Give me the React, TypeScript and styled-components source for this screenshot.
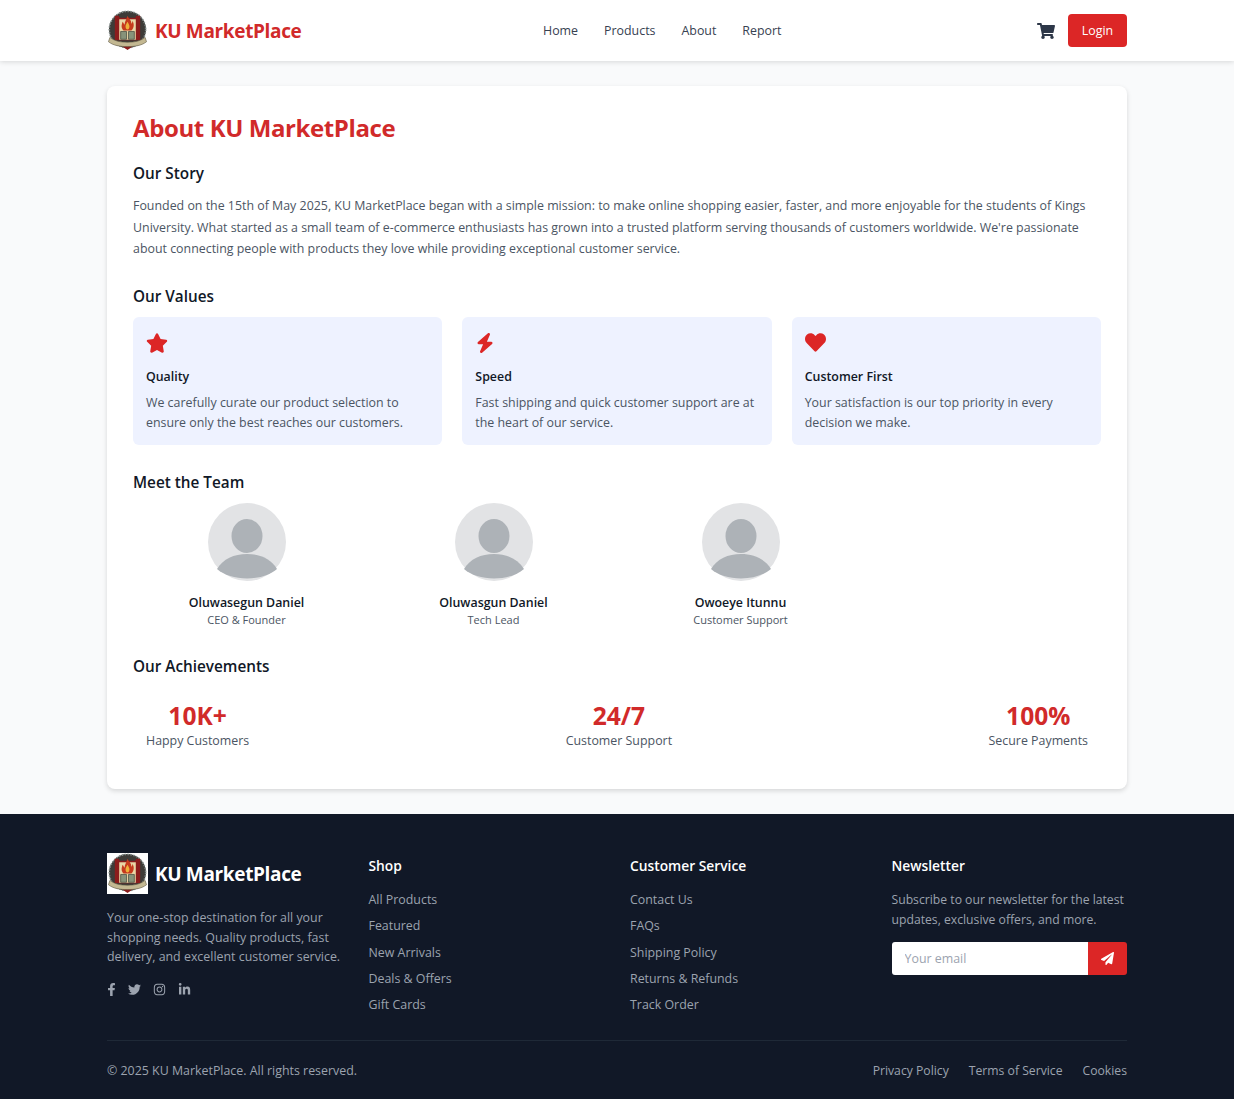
import React from "react";
import styled, { createGlobalStyle } from "styled-components";
import {
  FaFacebookF,
  FaHeart,
  FaInstagram,
  FaLinkedinIn,
  FaPaperPlane,
  FaShoppingCart,
  FaStar,
  FaTwitter,
} from "react-icons/fa";
import { FaBolt } from "react-icons/fa6";

const GlobalStyle = createGlobalStyle`
  * { box-sizing: border-box; }
  html, body { margin: 0; padding: 0; }
  body {
    background: #f9fafb;
    font-family: "Open Sans", "Noto Sans", sans-serif;
    color: #111827;
  }
  h1, h2, h3, h4, p, ul { margin: 0; padding: 0; }
  ul { list-style: none; }
`;

const Container = styled.div`
  width: 1020px;
  margin: 0 auto;
`;

const Header = styled.header`
  height: 61px;
  background: #fff;
  box-shadow: 0 1px 5px rgb(0 0 0 / 14%);
`;

const HeaderRow = styled(Container)`
  height: 100%;
  display: flex;
  align-items: center;
  justify-content: space-between;
`;

const Brand = styled.div<{ $light?: boolean }>`
  display: flex;
  align-items: center;
  gap: 7px;
  font-size: 19px;
  font-weight: 700;
  letter-spacing: -0.35px;
  color: ${(props) => (props.$light ? "#fff" : "#d12a2a")};
`;

const Nav = styled.nav`
  display: flex;
  gap: 26px;
  margin-right: 14px;
  font-size: 12.4px;
  color: #374151;
`;

const HeaderActions = styled.div`
  display: flex;
  align-items: center;
  gap: 13px;
  color: #2d3748;
`;

const LoginButton = styled.button`
  width: 59px;
  height: 33px;
  border: none;
  border-radius: 4px;
  background: #dc2626;
  color: #fff;
  font: 500 12.4px "Open Sans", sans-serif;
`;

const Main = styled.main`
  padding: 25px 0 25px;
`;

const Card = styled(Container)`
  height: 703px;
  padding: 26px 26px 0;
  background: #fff;
  border-radius: 8px;
  box-shadow: 0 2px 5px rgb(0 0 0 / 14%);
`;

const Title = styled.h1`
  font-size: 24px;
  line-height: 32px;
  font-weight: 700;
  letter-spacing: -0.4px;
  color: #d12a2a;
`;

const SectionTitle = styled.h2<{ $top: number }>`
  margin-top: ${(props) => props.$top}px;
  font-size: 15.3px;
  line-height: 22px;
  font-weight: 600;
  color: #111827;
`;

const Paragraph = styled.p`
  margin-top: 11px;
  font-size: 12.4px;
  line-height: 21.5px;
  color: #4b5563;
`;

const ValueGrid = styled.div`
  display: grid;
  grid-template-columns: repeat(3, 1fr);
  gap: 20px;
  margin-top: 10px;
`;

const ValueCard = styled.div`
  height: 128px;
  padding: 15px 13px 0;
  background: #eef2ff;
  border-radius: 6px;
`;

const ValueIcon = styled.div`
  display: flex;
  align-items: center;
  height: 22px;
  color: #dc2626;
`;

const ValueTitle = styled.h3`
  margin-top: 13px;
  font-size: 12.4px;
  line-height: 20px;
  font-weight: 600;
  color: #111827;
`;

const ValueText = styled.p`
  margin-top: 6px;
  font-size: 12.4px;
  line-height: 20px;
  color: #4b5563;
`;

const TeamGrid = styled.div`
  display: grid;
  grid-template-columns: repeat(4, 1fr);
  gap: 20px;
  margin-top: 10px;
`;

const TeamMember = styled.div`
  display: flex;
  flex-direction: column;
  align-items: center;
`;

const MemberName = styled.h4`
  margin-top: 13px;
  font-size: 12.4px;
  line-height: 17px;
  font-weight: 600;
  color: #111827;
`;

const MemberRole = styled.p`
  font-size: 11px;
  line-height: 18px;
  color: #4b5563;
`;

const StatRow = styled.div`
  display: flex;
  justify-content: space-between;
  margin-top: 9px;
`;

const Stat = styled.div`
  padding: 13px;
  text-align: center;
`;

const StatNumber = styled.div`
  font-size: 24.6px;
  line-height: 34px;
  font-weight: 700;
  color: #d12a2a;
`;

const StatLabel = styled.div`
  font-size: 12.4px;
  line-height: 15px;
  color: #4b5563;
`;

const Footer = styled.footer`
  height: 285px;
  padding-top: 39px;
  background: #111827;
`;

const FooterGrid = styled.div`
  display: grid;
  grid-template-columns: repeat(4, 1fr);
  gap: 26px;
  height: 188px;
  border-bottom: 1px solid #1f2937;
`;

const FooterText = styled.p`
  margin-top: 14px;
  font-size: 12.4px;
  line-height: 19.6px;
  color: #9ca3af;
`;

const Socials = styled.div`
  display: flex;
  align-items: center;
  gap: 12px;
  margin-top: 16px;
  color: #9ca3af;
`;

const FacebookIcon = styled(FaFacebookF)`
  width: 9px;
`;

const FooterHeading = styled.h3`
  margin-top: 3px;
  font-size: 13.8px;
  line-height: 20px;
  font-weight: 600;
  color: #fff;
`;

const FooterLinks = styled.ul`
  display: flex;
  flex-direction: column;
  gap: 8.3px;
  margin-top: 15px;
  font-size: 12.4px;
  line-height: 18px;
  color: #9ca3af;
`;

const NewsletterText = styled(FooterText)`
  font-size: 12.2px;
`;

const SubscribeForm = styled.form`
  display: flex;
  height: 33px;
  margin-top: 13px;
`;

const EmailInput = styled.input`
  flex: 1;
  min-width: 0;
  padding: 0 13px;
  border: none;
  border-radius: 3px 0 0 3px;
  background: #fff;
  font: 12.4px "Open Sans", sans-serif;

  &::placeholder {
    color: #9ca3af;
  }
`;

const SendButton = styled.button`
  width: 39px;
  display: flex;
  align-items: center;
  justify-content: center;
  border: none;
  border-radius: 0 3px 3px 0;
  background: #dc2626;
  color: #fff;
`;

const FooterBottom = styled.div`
  display: flex;
  align-items: center;
  justify-content: space-between;
  height: 58px;
  font-size: 12.4px;
  color: #9ca3af;
`;

const LegalLinks = styled.div`
  display: flex;
  gap: 20px;
  font-size: 12.2px;
`;

const Emblem = ({ size, boxed }: { size: number; boxed?: boolean }) => (
  <svg width={size} height={size} viewBox="0 0 42 42" aria-hidden="true">
    {boxed && <rect width="42" height="42" fill="#fff" />}
    <circle cx="21" cy="20" r="19" fill="#3d3b38" />
    <circle cx="21" cy="20" r="18.6" fill="none" stroke="#7f8a88" strokeWidth="1.6" strokeDasharray="1.6 1.4" />
    <path d="M8 6h4l1 2h16l1-2h4v25H8z" fill="#8c1c1c" />
    <rect x="12.5" y="9.5" width="17" height="21" fill="#e9d7a6" />
    <path d="M21 6c1 3 4 4 4 8 1-1 1-2 1-3 2 3 2 7-1 10h-8c-3-3-2-6-1-9 1 1 1 2 2 3 0-3 2-5 3-9z" fill="#c63a1d" />
    <path d="M21 12c1 2 2 3 2 5s-1 3-2 3-2-1-2-3 1-3 2-5z" fill="#eeb03a" />
    <path d="M14 22h6v8h-6zM22 22h6v8h-6z" fill="#87937a" stroke="#4c5044" strokeWidth="0.8" />
    <path d="M14 36l7 5 7-5z" fill="#8c1c1c" />
    <path d="M3 28c5 4 11 5 18 5s13-1 18-5l1.5 4.500c-5 4-12 5-19.500 5s-14.500-1-19.500-5z" fill="#c3b892" stroke="#5c5440" strokeWidth="0.6" />
  </svg>
);

const Avatar = () => (
  <svg width="78" height="78" viewBox="0 0 78 78" aria-hidden="true">
    <circle cx="39" cy="39" r="39" fill="#e2e3e5" />
    <ellipse cx="39" cy="33" rx="15.500" ry="17" fill="#adb2b7" />
    <path d="M9 66C15 56 26 51 39 51s24 5 30 15C62 72 51 75.500 39 75.500S16 72 9 66z" fill="#adb2b7" />
  </svg>
);

const values = [
  { icon: <FaStar size={22} />, title: "Quality", text: "We carefully curate our product selection to ensure only the best reaches our customers." },
  { icon: <FaBolt size={20} />, title: "Speed", text: "Fast shipping and quick customer support are at the heart of our service." },
  { icon: <FaHeart size={21} />, title: "Customer First", text: "Your satisfaction is our top priority in every decision we make." },
];

const team = [
  { name: "Oluwasegun Daniel", role: "CEO & Founder" },
  { name: "Oluwasgun Daniel", role: "Tech Lead" },
  { name: "Owoeye Itunnu", role: "Customer Support" },
];

const stats = [
  { value: "10K+", label: "Happy Customers" },
  { value: "24/7", label: "Customer Support" },
  { value: "100%", label: "Secure Payments" },
];

const shopLinks = ["All Products", "Featured", "New Arrivals", "Deals & Offers", "Gift Cards"];
const serviceLinks = ["Contact Us", "FAQs", "Shipping Policy", "Returns & Refunds", "Track Order"];

export default function App() {
  return (
    <>
      <GlobalStyle />
      <Header>
        <HeaderRow>
          <Brand>
            <Emblem size={41} />
            KU MarketPlace
          </Brand>
          <Nav>
            <span>Home</span>
            <span>Products</span>
            <span>About</span>
            <span>Report</span>
          </Nav>
          <HeaderActions>
            <FaShoppingCart size={18} />
            <LoginButton>Login</LoginButton>
          </HeaderActions>
        </HeaderRow>
      </Header>

      <Main>
        <Card>
          <Title>About KU MarketPlace</Title>
          <SectionTitle $top={18}>Our Story</SectionTitle>
          <Paragraph>
            Founded on the 15th of May 2025, KU MarketPlace began with a simple mission: to make online shopping
            easier, faster, and more enjoyable for the students of Kings University. What started as a small team of
            e-commerce enthusiasts has grown into a trusted platform serving thousands of customers worldwide. We're
            passionate about connecting people with products they love while providing exceptional customer service.
          </Paragraph>
          <SectionTitle $top={25}>Our Values</SectionTitle>
          <ValueGrid>
            {values.map((value) => (
              <ValueCard key={value.title}>
                <ValueIcon>{value.icon}</ValueIcon>
                <ValueTitle>{value.title}</ValueTitle>
                <ValueText>{value.text}</ValueText>
              </ValueCard>
            ))}
          </ValueGrid>
          <SectionTitle $top={26}>Meet the Team</SectionTitle>
          <TeamGrid>
            {team.map((member) => (
              <TeamMember key={member.name}>
                <Avatar />
                <MemberName>{member.name}</MemberName>
                <MemberRole>{member.role}</MemberRole>
              </TeamMember>
            ))}
          </TeamGrid>
          <SectionTitle $top={26}>Our Achievements</SectionTitle>
          <StatRow>
            {stats.map((stat) => (
              <Stat key={stat.label}>
                <StatNumber>{stat.value}</StatNumber>
                <StatLabel>{stat.label}</StatLabel>
              </Stat>
            ))}
          </StatRow>
        </Card>
      </Main>

      <Footer>
        <Container>
          <FooterGrid>
            <div>
              <Brand $light>
                <Emblem size={41} boxed />
                KU MarketPlace
              </Brand>
              <FooterText>
                Your one-stop destination for all your shopping needs. Quality products, fast delivery, and excellent
                customer service.
              </FooterText>
              <Socials>
                <FacebookIcon size={13} />
                <FaTwitter size={13} />
                <FaInstagram size={13} />
                <FaLinkedinIn size={13} />
              </Socials>
            </div>
            <div>
              <FooterHeading>Shop</FooterHeading>
              <FooterLinks>
                {shopLinks.map((link) => (
                  <li key={link}>{link}</li>
                ))}
              </FooterLinks>
            </div>
            <div>
              <FooterHeading>Customer Service</FooterHeading>
              <FooterLinks>
                {serviceLinks.map((link) => (
                  <li key={link}>{link}</li>
                ))}
              </FooterLinks>
            </div>
            <div>
              <FooterHeading>Newsletter</FooterHeading>
              <NewsletterText>Subscribe to our newsletter for the latest updates, exclusive offers, and more.</NewsletterText>
              <SubscribeForm>
                <EmailInput placeholder="Your email" />
                <SendButton type="button">
                  <FaPaperPlane size={13} />
                </SendButton>
              </SubscribeForm>
            </div>
          </FooterGrid>
          <FooterBottom>
            <span>© 2025 KU MarketPlace. All rights reserved.</span>
            <LegalLinks>
              <span>Privacy Policy</span>
              <span>Terms of Service</span>
              <span>Cookies</span>
            </LegalLinks>
          </FooterBottom>
        </Container>
      </Footer>
    </>
  );
}
